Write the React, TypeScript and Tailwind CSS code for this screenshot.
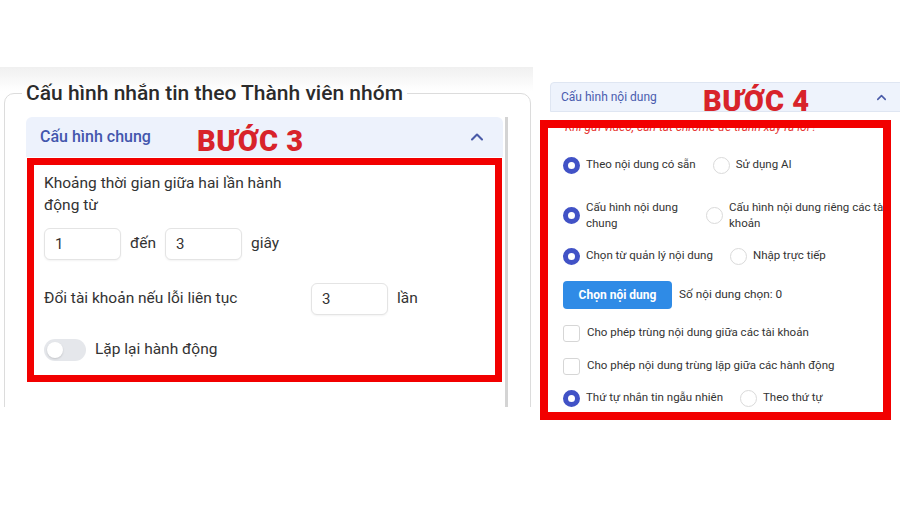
import React from "react";
import { ChevronUp } from "lucide-react";

const Radio = ({ checked }: { checked?: boolean }) => (
  <span
    className={
      checked
        ? "w-[17px] h-[17px] shrink-0 rounded-full border-[5px] border-[#4152c6] bg-white"
        : "w-[17px] h-[17px] shrink-0 rounded-full border-[1.5px] border-[#dadada] bg-white"
    }
  />
);

const Option = ({ checked, label, labelClass }: { checked?: boolean; label: string; labelClass?: string }) => (
  <div className="flex items-center gap-[6px] shrink-0">
    <Radio checked={checked} />
    <span className={labelClass ?? "whitespace-nowrap"}>{label}</span>
  </div>
);

const Check = ({ label }: { label: string }) => (
  <div className="flex items-center gap-[7px] h-[18px]">
    <span className="w-[17px] h-[17px] rounded-[3px] border-[1.5px] border-[#d6d6d6] bg-white" />
    <span className="whitespace-nowrap">{label}</span>
  </div>
);

const TimeInput = ({ value }: { value: string }) => (
  <input
    readOnly
    value={value}
    className="w-[77px] h-[32px] rounded-[6px] border border-[#e4e4e4] bg-white px-[10px] text-[15px] text-[#333] shadow-[0_1px_2px_rgba(0,0,0,0.05)] outline-none"
  />
);

export default function App() {
  return (
    <div className="relative w-[900px] h-[506px] overflow-hidden bg-white flex items-start font-['Roboto',sans-serif] text-[#333]">
      {/* left screenshot */}
      <div className="w-[533px] shrink-0 mt-[67px] h-[340px] overflow-hidden bg-[linear-gradient(to_bottom,#f0f0f0,#ffffff_24px)]">
        <fieldset className="ml-[4px] mr-[2px] mt-[12px] h-[400px] rounded-[10px] border border-[#dcdcdc] bg-white pl-[21px]">
          <legend className="-ml-[4px] px-[4px] text-[21px] leading-[28px] font-medium text-[#2b2b2b]">
            Cấu hình nhắn tin theo Thành viên nhóm
          </legend>
          <div className="mt-[10px] flex items-start gap-[2px]">
            <div className="w-[477px]">
              <div className="h-[40px] rounded-t-[6px] bg-[#edf2fc] flex items-center justify-between pl-[14px] pr-[16px]">
                <span className="text-[16px] font-medium text-[#4356ad]">Cấu hình chung</span>
                <ChevronUp size={20} strokeWidth={2.5} className="text-[#4a5ba8]" />
              </div>
              <div className="mx-[1px] mt-[1px] border-[7px] border-[#f20000] bg-white pt-[7px] pl-[10px] pb-[14px] text-[15.5px]">
                <div className="w-[260px] leading-[22px]">Khoảng thời gian giữa hai lần hành động từ</div>
                <div className="mt-[12px] flex items-center gap-[9px]">
                  <TimeInput value="1" />
                  <span>đến</span>
                  <TimeInput value="3" />
                  <span>giây</span>
                </div>
                <div className="mt-[23px] flex items-center gap-[9px]">
                  <span className="w-[258px]">Đổi tài khoản nếu lỗi liên tục</span>
                  <TimeInput value="3" />
                  <span>lần</span>
                </div>
                <div className="mt-[23px] flex items-center gap-[9px]">
                  <span className="w-[42px] h-[22px] rounded-full bg-[#e5e7eb] flex items-center pl-[3px]">
                    <span className="w-[16px] h-[16px] rounded-full bg-white shadow-[0_1px_2px_rgba(0,0,0,0.15)]" />
                  </span>
                  <span>Lặp lại hành động</span>
                </div>
              </div>
            </div>
            <div className="w-[3px] h-[300px] bg-[#d4d4d4]" />
          </div>
        </fieldset>
      </div>

      {/* right screenshot */}
      <div className="flex-1 mt-[82px] h-[340px] overflow-hidden">
        <div className="ml-[17px] w-[352px] h-[30px] rounded-tl-[4px] border border-[#dfe6f2] bg-[#eef3fc] flex items-center justify-between pl-[10px] pr-[12px]">
          <span className="text-[12px] text-[#4a5cae]">Cấu hình nội dung</span>
          <ChevronUp size={15} strokeWidth={2.5} className="text-[#4a5ba8]" />
        </div>
        <div className="ml-[7px] mt-[8px] w-[351px] h-[300px] overflow-hidden border-[8px] border-[#f20000] bg-white pl-[15px] text-[11.5px] text-[#333]">
          <div className="-mt-[10px] pl-[2px] h-[18px] leading-[18px] italic text-[12px] text-[#e53935] whitespace-nowrap">
            Khi gửi video, cần tắt chrome để tránh xảy ra lỗi !
          </div>
          <div className="mt-[20px] h-[18px] flex items-center gap-[17px]">
            <Option checked label="Theo nội dung có sẵn" />
            <Option label="Sử dụng AI" />
          </div>
          <div className="mt-[25px] flex items-center gap-[14px] leading-[16px]">
            <Option checked label="Cấu hình nội dung chung" labelClass="w-[106px]" />
            <Option label="Cấu hình nội dung riêng các tài khoản" labelClass="w-[175px]" />
          </div>
          <div className="mt-[16px] h-[18px] flex items-center gap-[17px]">
            <Option checked label="Chọn từ quản lý nội dung" />
            <Option label="Nhập trực tiếp" />
          </div>
          <div className="mt-[16px] flex items-center gap-[7px]">
            <button className="w-[109px] h-[28px] rounded-[4px] bg-[#2f8be6] text-white font-bold text-[12px]">Chọn nội dung</button>
            <span className="text-[11.8px]">Số nội dung chọn: 0</span>
          </div>
          <div className="mt-[15px]">
            <Check label="Cho phép trùng nội dung giữa các tài khoản" />
          </div>
          <div className="mt-[15px]">
            <Check label="Cho phép nội dung trùng lặp giữa các hành động" />
          </div>
          <div className="mt-[14px] h-[18px] flex items-center gap-[17px]">
            <Option checked label="Thứ tự nhắn tin ngẫu nhiên" />
            <Option label="Theo thứ tự" />
          </div>
        </div>
      </div>

      {/* step labels */}
      <div className="absolute left-[197px] top-[127px] text-[29px] leading-none font-black tracking-[0.02em] text-[#d8232a]">BƯỚC 3</div>
      <div className="absolute left-[703px] top-[87px] text-[29px] leading-none font-black tracking-[0.02em] text-[#d8232a]">BƯỚC 4</div>
    </div>
  );
}
